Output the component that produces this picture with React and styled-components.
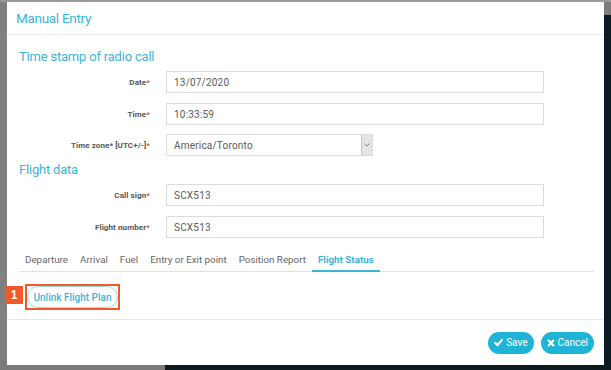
import React from "react";
import styled, { createGlobalStyle } from "styled-components";

const Global = createGlobalStyle`
  html, body { margin: 0; padding: 0; width: 611px; height: 370px; overflow: hidden; }
  body { font-family: Roboto, "Open Sans", sans-serif; }
`;

const Backdrop = styled.div`
  width: 611px;
  height: 370px;
  box-sizing: border-box;
  padding: 2px 7px 0 7px;
  background:
    linear-gradient(#9a9a9a, #9a9a9a) top / 100% 2px no-repeat,
    linear-gradient(to right, #7a7a7a 0 165px, #0d1a20 165px) bottom / 100% 10px no-repeat,
    linear-gradient(#808080, #808080) left / 7px 100% no-repeat,
    linear-gradient(#7d7d7d 0 15px, #0c1a22 15px) right / 7px 100% no-repeat,
    #7a7a7a;
`;

const Modal = styled.div`
  width: 597px;
  height: 363px;
  background: #fff;
  display: flex;
  flex-direction: column;
`;

const Header = styled.div`
  height: 33px;
  box-sizing: border-box;
  border-bottom: 1px solid #eeeeee;
  padding: 0 9px;
  display: flex;
  align-items: center;
`;

const Title = styled.h4`
  margin: 0;
  font-weight: 400;
  font-size: 13.5px;
  color: #3cb4d6;
  letter-spacing: -0.3px;
`;

const Body = styled.div`
  flex: 1;
  padding: 12px 10px 0 12px;
  display: flex;
  flex-direction: column;
  border-bottom: 1px solid #e8e8e8;
`;

const SectionTitle = styled.h3`
  margin: ${(p) => p.$top || 0}px 0 0;
  font-weight: 400;
  font-size: 13px;
  color: #3cb4d6;
  height: 20px;
  line-height: 20px;
  letter-spacing: -0.2px;
`;

const Row = styled.div`
  display: grid;
  grid-template-columns: 131px ${(p) => p.$width || 378}px;
  column-gap: 16px;
  align-items: center;
  margin-top: ${(p) => p.$top || 10}px;
`;

const Label = styled.label`
  text-align: right;
  font-size: 8px;
  font-weight: 700;
  color: #555;
  letter-spacing: 0.1px;
`;

const Star = styled.span`
  color: #d9534f;
`;

const Input = styled.div`
  height: 22px;
  box-sizing: border-box;
  border: 1px solid #dcdcdc;
  padding: 0 7px;
  display: flex;
  align-items: center;
  font-size: 10px;
  color: #5a5a5a;
  letter-spacing: 0.2px;
`;

const Select = styled(Input)`
  padding-right: 0;
  justify-content: space-between;
`;

const SelectArrow = styled.div`
  width: 10px;
  height: 20px;
  background: #e4e4e4;
  border-left: 1px solid #c8c8c8;
  display: flex;
  align-items: center;
  justify-content: center;
`;

const Tabs = styled.div`
  margin-top: 10px;
  width: 575px;
  display: flex;
  border-bottom: 1px solid #e2e2e2;
`;

const Tab = styled.div`
  padding: 0 6px;
  height: 24px;
  box-sizing: border-box;
  display: flex;
  align-items: center;
  font-size: 9.8px;
  color: ${(p) => (p.$active ? "#3cb4d6" : "#666")};
  font-weight: ${(p) => (p.$active ? 700 : 400)};
  border-bottom: 2px solid ${(p) => (p.$active ? "#3cb4d6" : "transparent")};
  margin-bottom: -1px;
`;

const ActionArea = styled.div`
  padding: 12px 0 0 6px;
`;

const Highlight = styled.div`
  display: inline-flex;
  border: 2px solid #f05a28;
  position: relative;
`;

const Badge = styled.div`
  position: absolute;
  left: -22px;
  top: 0px;
  width: 18px;
  height: 18px;
  background: #f05a28;
  color: #fff;
  font-size: 12px;
  font-weight: 700;
  display: flex;
  align-items: center;
  justify-content: center;
  font-family: "Liberation Sans", Arial, sans-serif;
`;

const OutlineButton = styled.button`
  height: 22px;
  width: 91px;
  border: 1px solid #9fd8e8;
  border-radius: 11px;
  background: #fff;
  color: #3cb4d6;
  font-family: inherit;
  font-size: 10px;
  font-weight: 500;
  padding: 0;
  cursor: pointer;
`;

const Footer = styled.div`
  height: 45px;
  display: flex;
  justify-content: flex-end;
  align-items: center;
  gap: 7px;
  padding: 0 10px 0 0;
  box-sizing: border-box;
`;

const PrimaryButton = styled.button`
  height: 22px;
  border: none;
  border-radius: 11px;
  background: #1fb3d5;
  color: #fff;
  font-family: inherit;
  font-size: 10px;
  padding: 0 6px;
  display: flex;
  align-items: center;
  gap: 3px;
  cursor: pointer;
`;

const Check = () => (
  <svg width="9" height="9" viewBox="0 0 10 10">
    <path d="M1.2 5.2 L4 8 L8.8 2" fill="none" stroke="#fff" strokeWidth="2.2" strokeLinecap="round" strokeLinejoin="round" />
  </svg>
);

const Cross = () => (
  <svg width="8" height="8" viewBox="0 0 10 10">
    <path d="M2 2 L8 8 M8 2 L2 8" fill="none" stroke="#fff" strokeWidth="2.6" strokeLinecap="round" />
  </svg>
);

const Chevron = () => (
  <svg width="6" height="4" viewBox="0 0 6 4">
    <path d="M0.5 0.5 L3 3 L5.5 0.5" fill="none" stroke="#777" strokeWidth="0.9" />
  </svg>
);

const Field = ({ label, value, top }) => (
  <Row $top={top}>
    <Label>
      {label}
      <Star>*</Star>
    </Label>
    <Input>{value}</Input>
  </Row>
);

export default function App() {
  const tabs = ["Departure", "Arrival", "Fuel", "Entry or Exit point", "Position Report", "Flight Status"];
  return (
    <>
      <Global />
      <Backdrop>
        <Modal>
          <Header>
            <Title>Manual Entry</Title>
          </Header>
          <Body>
            <SectionTitle>Time stamp of radio call</SectionTitle>
            <Field label="Date" value="13/07/2020" top={4} />
            <Field label="Time" value="10:33:59" />
            <Row $top={9} $width={207}>
              <Label>
                Time zone* [UTC+/-]<Star>*</Star>
              </Label>
              <Select>
                America/Toronto
                <SelectArrow>
                  <Chevron />
                </SelectArrow>
              </Select>
            </Row>
            <SectionTitle $top={4}>Flight data</SectionTitle>
            <Field label="Call sign" value="SCX513" top={4} />
            <Field label="Flight number" value="SCX513" />
            <Tabs>
              {tabs.map((t) => (
                <Tab key={t} $active={t === "Flight Status"}>
                  {t}
                </Tab>
              ))}
            </Tabs>
            <ActionArea>
              <Highlight>
                <Badge>1</Badge>
                <OutlineButton>Unlink Flight Plan</OutlineButton>
              </Highlight>
            </ActionArea>
          </Body>
          <Footer>
            <PrimaryButton>
              <Check /> Save
            </PrimaryButton>
            <PrimaryButton>
              <Cross /> Cancel
            </PrimaryButton>
          </Footer>
        </Modal>
      </Backdrop>
    </>
  );
}
